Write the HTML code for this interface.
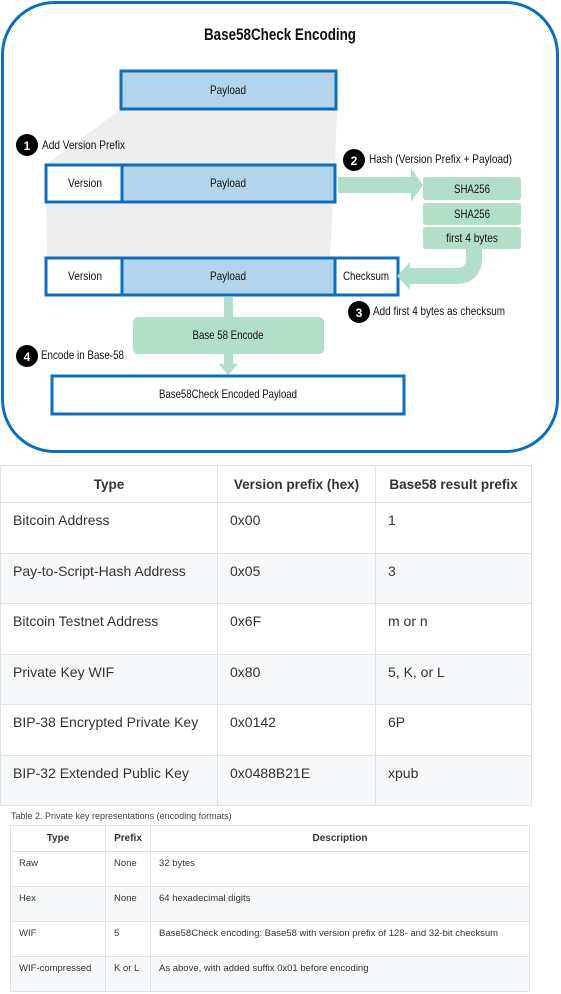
<!DOCTYPE html>
<html><head><meta charset="utf-8"><style>
body{margin:0;width:561px;height:994px;background:#fff;position:relative;overflow:hidden;font-family:"Liberation Sans",sans-serif;color:#333}
svg{position:absolute;left:0;top:0}
table{border-collapse:collapse;position:absolute}
#t1{left:0;top:465px;width:532px;font-size:14px}
#t1 td,#t1 th{border:1px solid #dfe2e5;padding:0 12px;vertical-align:top;white-space:nowrap}
#t1 th{height:36px;vertical-align:middle;font-weight:bold;font-size:13.5px}
#t1 td{height:50.5px;padding-top:9px;box-sizing:border-box}
#t1 tr:nth-child(odd) td{background:#f6f8fa}
#t1 tr:nth-child(even) td{background:#fff}
#cap{position:absolute;left:11px;top:811px;font-size:9px;color:#444}
#t2{left:10px;top:825px;width:520px;font-size:9.5px}
#t2 td,#t2 th{border:1px solid #dfe2e5;padding:0 8px;vertical-align:top;white-space:nowrap}
#t2 th{height:25px;vertical-align:middle;font-size:10px}
#t2 td{height:35px;padding-top:6px;box-sizing:border-box}
#t2 tr:nth-child(odd) td{background:#f6f8fa}
</style></head><body>
<svg width="561" height="460" viewBox="0 0 561 460" font-family="Liberation Sans Narrow, Liberation Sans, sans-serif">
<rect x="2.5" y="2.5" width="555" height="449" rx="52" fill="#fff" stroke="#0a6fc0" stroke-width="3"/>
<text x="280" y="40" text-anchor="middle" font-size="17" font-weight="bold" fill="#111" textLength="152" lengthAdjust="spacingAndGlyphs">Base58Check Encoding</text>
<polygon points="120,110 337,110 335,165 45,165" fill="#eee"/>
<polygon points="46,204 333,204 330,258 47,258" fill="#eee"/>
<rect x="121" y="71" width="215" height="38" fill="#b3d4ea" stroke="#0a6fc0" stroke-width="3"/>
<g font-size="12" fill="#111" text-anchor="middle" lengthAdjust="spacingAndGlyphs">
<text x="228" y="94" textLength="36" lengthAdjust="spacingAndGlyphs">Payload</text>
</g>
<rect x="46" y="165" width="76" height="37" fill="#fff" stroke="#0a6fc0" stroke-width="3"/>
<rect x="122" y="165" width="213" height="37" fill="#b3d4ea" stroke="#0a6fc0" stroke-width="3"/>
<rect x="46" y="258" width="76" height="37" fill="#fff" stroke="#0a6fc0" stroke-width="3"/>
<rect x="335" y="258" width="63" height="37" fill="#fff" stroke="#0a6fc0" stroke-width="3"/>
<rect x="122" y="258" width="213" height="37" fill="#b3d4ea" stroke="#0a6fc0" stroke-width="3"/>
<polygon points="338,177 411,177 411,168 423,185 411,202 411,193 338,193" fill="#b2dfca"/>
<rect x="423" y="177" width="98" height="23" rx="3" fill="#b2dfca"/>
<rect x="423" y="203" width="98" height="22" rx="3" fill="#b2dfca"/>
<rect x="423" y="227" width="98" height="22" rx="3" fill="#b2dfca"/>
<path d="M474,249 L474,258 Q474,276 456,276 L410,276" fill="none" stroke="#b2dfca" stroke-width="16"/>
<polygon points="410,262 410,290 397,276" fill="#b2dfca"/>
<rect x="224" y="297" width="9" height="22" fill="#b2dfca"/>
<rect x="133" y="317" width="191" height="37" rx="5" fill="#b2dfca"/>
<rect x="224" y="354" width="9" height="12" fill="#b2dfca"/>
<polygon points="219,364 238,364 228,375" fill="#b2dfca"/>
<rect x="52" y="376" width="352" height="38" fill="#fff" stroke="#0a6fc0" stroke-width="3"/>
<g font-size="12" fill="#111" text-anchor="middle">
<text x="85" y="187" textLength="34" lengthAdjust="spacingAndGlyphs">Version</text>
<text x="228" y="187" textLength="36" lengthAdjust="spacingAndGlyphs">Payload</text>
<text x="85" y="280" textLength="34" lengthAdjust="spacingAndGlyphs">Version</text>
<text x="228" y="280" textLength="36" lengthAdjust="spacingAndGlyphs">Payload</text>
<text x="366" y="280" textLength="46" lengthAdjust="spacingAndGlyphs">Checksum</text>
<text x="472" y="193" textLength="36" lengthAdjust="spacingAndGlyphs">SHA256</text>
<text x="472" y="218" textLength="36" lengthAdjust="spacingAndGlyphs">SHA256</text>
<text x="472" y="242" textLength="52" lengthAdjust="spacingAndGlyphs">first 4 bytes</text>
<text x="228" y="339" textLength="71" lengthAdjust="spacingAndGlyphs">Base 58 Encode</text>
<text x="228" y="398" textLength="138" lengthAdjust="spacingAndGlyphs">Base58Check Encoded Payload</text>
</g>
<g font-size="12" fill="#111">
<circle cx="27" cy="145" r="11" fill="#000"/><text x="27" y="150" text-anchor="middle" fill="#fff" font-weight="bold">1</text>
<text x="42" y="149" textLength="83" lengthAdjust="spacingAndGlyphs">Add Version Prefix</text>
<circle cx="354" cy="160" r="11" fill="#000"/><text x="354" y="165" text-anchor="middle" fill="#fff" font-weight="bold">2</text>
<text x="369" y="163" textLength="143" lengthAdjust="spacingAndGlyphs">Hash (Version Prefix + Payload)</text>
<circle cx="359" cy="312" r="11" fill="#000"/><text x="359" y="317" text-anchor="middle" fill="#fff" font-weight="bold">3</text>
<text x="373" y="315" textLength="132" lengthAdjust="spacingAndGlyphs">Add first 4 bytes as checksum</text>
<circle cx="27" cy="356" r="11" fill="#000"/><text x="27" y="361" text-anchor="middle" fill="#fff" font-weight="bold">4</text>
<text x="41" y="359" textLength="83" lengthAdjust="spacingAndGlyphs">Encode in Base-58</text>
</g>
</svg>
<table id="t1">
<tr><th style="width:192px">Type</th><th style="width:133px">Version prefix (hex)</th><th>Base58 result prefix</th></tr>
<tr><td>Bitcoin Address</td><td>0x00</td><td>1</td></tr>
<tr><td>Pay-to-Script-Hash Address</td><td>0x05</td><td>3</td></tr>
<tr><td>Bitcoin Testnet Address</td><td>0x6F</td><td>m or n</td></tr>
<tr><td>Private Key WIF</td><td>0x80</td><td>5, K, or L</td></tr>
<tr><td>BIP-38 Encrypted Private Key</td><td>0x0142</td><td>6P</td></tr>
<tr><td>BIP-32 Extended Public Key</td><td>0x0488B21E</td><td>xpub</td></tr>
</table>
<div id="cap">Table 2. Private key representations (encoding formats)</div>
<table id="t2">
<tr><th style="width:78px">Type</th><th style="width:28px">Prefix</th><th>Description</th></tr>
<tr><td>Raw</td><td>None</td><td>32 bytes</td></tr>
<tr><td>Hex</td><td>None</td><td>64 hexadecimal digits</td></tr>
<tr><td>WIF</td><td>5</td><td>Base58Check encoding: Base58 with version prefix of 128- and 32-bit checksum</td></tr>
<tr><td>WIF-compressed</td><td>K or L</td><td>As above, with added suffix 0x01 before encoding</td></tr>
</table>
</body></html>
